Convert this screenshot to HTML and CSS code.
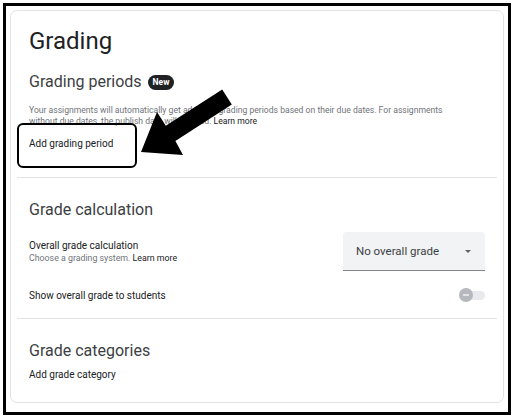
FILE: index.html
```html
<!DOCTYPE html>
<html>
<head>
<meta charset="utf-8">
<link rel="stylesheet" href="styles.css">
</head>
<body>
<div class="frame">
  <div class="card">
    <section class="sec sec-first">
      <h1 class="title">Grading</h1>
      <div class="head-row">
        <h2 class="heading">Grading periods</h2>
        <span class="badge">New</span>
      </div>
      <p class="desc">Your assignments will automatically get added to grading periods based on their due dates. For assignments without due dates, the publish date will be used. <span class="link">Learn more</span></p>
      <div class="action action-first"><span class="highlight">Add grading period</span></div>
    </section>
    <section class="sec sec-calc">
      <h2 class="heading">Grade calculation</h2>
      <div class="row row-select">
        <div class="labels">
          <div class="label">Overall grade calculation</div>
          <div class="sub">Choose a grading system. <span class="link">Learn more</span></div>
        </div>
        <div class="select">
          <span>No overall grade</span>
          <span class="caret"></span>
        </div>
      </div>
      <div class="row row-toggle">
        <div class="label">Show overall grade to students</div>
        <div class="toggle"><span class="track"></span><span class="thumb"><span class="dash"></span></span></div>
      </div>
    </section>
    <section class="sec sec-last">
      <h2 class="heading">Grade categories</h2>
      <div class="action action-last">Add grade category</div>
    </section>
  </div>
</div>
<svg class="arrow" width="514" height="418" viewBox="0 0 514 418">
  <polygon points="141,152 183,155 175.4,140.9 231.8,104.6 222.2,89.4 165.8,125.7 157,112" fill="#000"/>
</svg>
</body>
</html>
```
FILE: styles.css
```css
* { box-sizing: border-box; }
html, body { margin: 0; padding: 0; background: #fff; }
body {
  width: 514px;
  height: 418px;
  position: relative;
  font-family: Roboto, "Liberation Sans", sans-serif;
  color: #202124;
  overflow: hidden;
}
.frame {
  position: absolute;
  left: 3px;
  top: 3px;
  width: 508px;
  height: 412px;
  border: 3px solid #000;
  padding: 4px 4px 9px 4px;
}
.card {
  height: 100%;
  border: 1px solid #e3e3e3;
  border-radius: 7px;
  padding: 0 6px;
  display: flex;
  flex-direction: column;
}
.sec { padding: 0 12px; border-bottom: 1px solid #e3e3e3; }
.sec-last { border-bottom: none; padding-top: 22px; }
.sec-first { padding-top: 16px; padding-bottom: 26px; }
.sec-calc { padding-top: 22px; padding-bottom: 16px; }
.title {
  margin: 0;
  font-size: 24px;
  line-height: 28px;
  font-weight: 400;
  color: #202124;
}
.head-row {
  margin-top: 17px;
  display: flex;
  align-items: center;
  gap: 6px;
}
.heading {
  margin: 0;
  font-size: 16px;
  line-height: 20px;
  font-weight: 400;
  color: #3c4043;
}
.badge {
  background: #202124;
  color: #fff;
  font-size: 8.5px;
  font-weight: 700;
  line-height: 15px;
  height: 15px;
  padding: 0 5px;
  border-radius: 8px;
}
.desc {
  margin: 13px 0 0 0;
  padding-right: 24px;
  font-size: 8.6px;
  line-height: 10.5px;
  color: #6f7378;
}
.link { color: #202124; }
.action {
  font-size: 10px;
  line-height: 14px;
  font-weight: 400;
  color: #202124;
}
.action-first { margin-top: 11px; position: relative; }
.highlight { position: relative; }
.highlight::before {
  content: "";
  position: absolute;
  left: -12px;
  top: -15px;
  width: 116px;
  height: 41px;
  border: 2px solid #000;
  border-radius: 6px;
}
.action-last { margin-top: 7px; }
.row {
  display: flex;
  justify-content: space-between;
  align-items: center;
}
.row-select { margin-top: 12px; }
.row-toggle { margin-top: 17px; }
.label {
  font-size: 10px;
  line-height: 13px;
  font-weight: 400;
  color: #202124;
}
.sub {
  font-size: 8.8px;
  line-height: 13px;
  color: #6f7378;
}
.select {
  width: 142px;
  height: 39px;
  background: #f1f3f4;
  border-bottom: 1px solid #80868b;
  border-radius: 4px 4px 0 0;
  display: flex;
  align-items: center;
  justify-content: space-between;
  padding: 0 14px 0 13px;
  font-size: 11.5px;
  color: #3c4043;
}
.caret {
  width: 0;
  height: 0;
  border-left: 3.5px solid transparent;
  border-right: 3.5px solid transparent;
  border-top: 3.5px solid #5f6368;
}
.toggle {
  position: relative;
  width: 26px;
  height: 14px;
}
.track {
  position: absolute;
  left: 3px;
  right: 0;
  top: 2.5px;
  height: 9px;
  border-radius: 5px;
  background: #e8eaed;
}
.thumb {
  position: absolute;
  left: 0;
  top: 0;
  width: 14px;
  height: 14px;
  border-radius: 50%;
  background: #b5b8bc;
  display: flex;
  align-items: center;
  justify-content: center;
}
.dash {
  width: 6px;
  height: 1.4px;
  background: #e2e3e5;
}
.arrow {
  position: absolute;
  left: 0;
  top: 0;
  pointer-events: none;
}
```
